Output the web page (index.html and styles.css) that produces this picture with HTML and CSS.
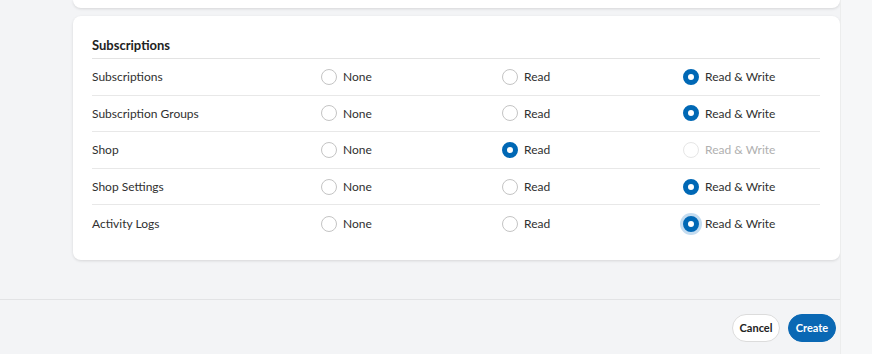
FILE: index.html
```html
<!DOCTYPE html>
<html>

<head>
    <meta charset="UTF-8">
    <link rel="stylesheet" href="styles.css">
</head>

<body>
    <div class="page">
        <div class="main">
            <div class="card stub"></div>
            <div class="card">
                <h2 class="title">Subscriptions</h2>
                <div class="row">
                    <span class="label">Subscriptions</span>
                    <span class="opt"><i class="radio"></i>None</span>
                    <span class="opt"><i class="radio"></i>Read</span>
                    <span class="opt"><i class="radio on"></i>Read &amp; Write</span>
                </div>
                <div class="row">
                    <span class="label">Subscription Groups</span>
                    <span class="opt"><i class="radio"></i>None</span>
                    <span class="opt"><i class="radio"></i>Read</span>
                    <span class="opt"><i class="radio on"></i>Read &amp; Write</span>
                </div>
                <div class="row">
                    <span class="label">Shop</span>
                    <span class="opt"><i class="radio"></i>None</span>
                    <span class="opt"><i class="radio on"></i>Read</span>
                    <span class="opt off"><i class="radio"></i>Read &amp; Write</span>
                </div>
                <div class="row">
                    <span class="label">Shop Settings</span>
                    <span class="opt"><i class="radio"></i>None</span>
                    <span class="opt"><i class="radio"></i>Read</span>
                    <span class="opt"><i class="radio on"></i>Read &amp; Write</span>
                </div>
                <div class="row">
                    <span class="label">Activity Logs</span>
                    <span class="opt"><i class="radio"></i>None</span>
                    <span class="opt"><i class="radio"></i>Read</span>
                    <span class="opt"><i class="radio on focus"></i>Read &amp; Write</span>
                </div>
            </div>
            <div class="footer">
                <button class="btn">Cancel</button>
                <button class="btn primary">Create</button>
            </div>
        </div>
        <div class="side"></div>
    </div>
</body>

</html>
```

FILE: styles.css
```css
* {
    box-sizing: border-box;
}
body {
    margin: 0;
    background: #f3f4f6;
    font-family: Lato, "Open Sans", sans-serif;
    font-size: 12px;
    color: #303030;
}
.page {
    display: flex;
    height: 354px;
    overflow: hidden;
}
.main {
    width: 840px;
    display: flex;
    flex-direction: column;
}
.side {
    flex: 1;
    background: #f6f7f8;
    border-left: 1px solid #eceded;
}
.card {
    margin-left: 73px;
    background: #fff;
    border-radius: 8px;
    box-shadow: 0 1px 3px rgba(0, 0, 0, .12);
    padding: 19px 20px 18px 19px;
}
.stub {
    height: 8px;
    padding: 0;
    border-radius: 0 0 8px 8px;
    margin-bottom: 8px;
}
.title {
    margin: 0;
    font-size: 13px;
    font-weight: 700;
    line-height: 18px;
    padding-top: 1px;
    padding-bottom: 4px;
    border-bottom: 1px solid #e3e3e3;
    color: #222;
}
.row {
    display: grid;
    grid-template-columns: 229px 181px 181px 1fr;
    align-items: center;
    height: 36.6px;
    border-bottom: 1px solid #e8e8e8;
}
.row:last-child {
    border-bottom: none;
}
.opt {
    display: flex;
    align-items: center;
    gap: 6px;
}
.opt.off {
    color: #b0b0b0;
}
.radio {
    width: 16px;
    height: 16px;
    border-radius: 50%;
    border: 1px solid #c4c4c4;
    background: #fff;
}
.off .radio {
    border-color: #e6e6e6;
}
.radio.on {
    border: 5px solid #0068b5;
}
.radio.focus {
    box-shadow: 0 0 0 3px #c4dcf0;
}
.footer {
    margin-top: 39px;
    border-top: 1px solid #e2e3e5;
    padding: 14px 4px 0 0;
    display: flex;
    justify-content: flex-end;
    gap: 8px;
}
.btn {
    height: 28px;
    width: 48px;
    padding: 0;
    border-radius: 14px;
    border: 1px solid #dcdcdc;
    background: #fff;
    font-family: inherit;
    font-size: 11px;
    font-weight: 700;
    color: #222;
}
.primary {
    background: #0a68b4;
    border-color: #0a68b4;
    color: #fff;
}
```
